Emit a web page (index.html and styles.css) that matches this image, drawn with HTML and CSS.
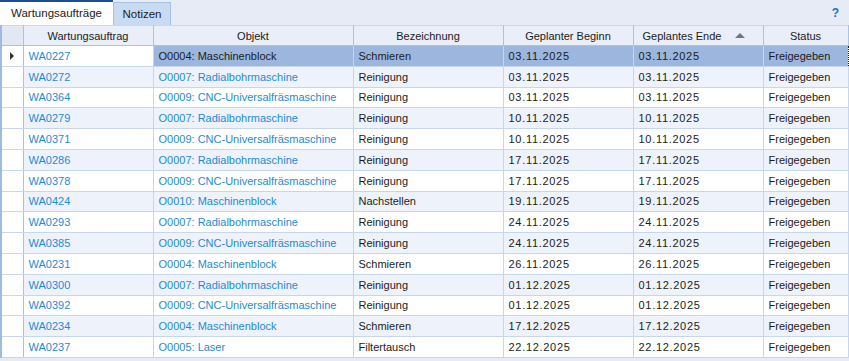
FILE: index.html
```html
<!DOCTYPE html>
<html lang="de">
<head>
    <meta charset="UTF-8">
    <title>Wartungsaufträge</title>
    <link rel="stylesheet" href="styles.css">
</head>
<body>
    <div class="tabstrip">
        <div class="tab active">Wartungsaufträge</div>
        <div class="tab">Notizen</div>
        <div class="help">?</div>
    </div>

    <table class="grid">
        <colgroup>
            <col class="c-ind">
            <col class="c-wa">
            <col class="c-obj">
            <col class="c-bez">
            <col class="c-beg">
            <col class="c-end">
            <col class="c-st">
        </colgroup>
        <thead>
            <tr>
                <th class="ind"></th>
                <th>Wartungsauftrag</th>
                <th>Objekt</th>
                <th>Bezeichnung</th>
                <th>Geplanter Beginn</th>
                <th class="sorted">Geplantes Ende<span class="sort-arrow"></span></th>
                <th>Status</th>
            </tr>
        </thead>
        <tbody>
            <tr class="selected">
                <td class="ind"><span class="row-arrow"></span></td>
                <td class="link focused">WA0227</td>
                <td>O0004: Maschinenblock</td>
                <td>Schmieren</td>
                <td class="date">03.11.2025</td>
                <td class="date">03.11.2025</td>
                <td>Freigegeben</td>
            </tr>
            <tr><td class="ind"></td><td class="link">WA0272</td><td class="link">O0007: Radialbohrmaschine</td><td>Reinigung</td><td class="date">03.11.2025</td><td class="date">03.11.2025</td><td>Freigegeben</td></tr>
            <tr><td class="ind"></td><td class="link">WA0364</td><td class="link">O0009: CNC-Universalfräsmaschine</td><td>Reinigung</td><td class="date">03.11.2025</td><td class="date">03.11.2025</td><td>Freigegeben</td></tr>
            <tr><td class="ind"></td><td class="link">WA0279</td><td class="link">O0007: Radialbohrmaschine</td><td>Reinigung</td><td class="date">10.11.2025</td><td class="date">10.11.2025</td><td>Freigegeben</td></tr>
            <tr><td class="ind"></td><td class="link">WA0371</td><td class="link">O0009: CNC-Universalfräsmaschine</td><td>Reinigung</td><td class="date">10.11.2025</td><td class="date">10.11.2025</td><td>Freigegeben</td></tr>
            <tr><td class="ind"></td><td class="link">WA0286</td><td class="link">O0007: Radialbohrmaschine</td><td>Reinigung</td><td class="date">17.11.2025</td><td class="date">17.11.2025</td><td>Freigegeben</td></tr>
            <tr><td class="ind"></td><td class="link">WA0378</td><td class="link">O0009: CNC-Universalfräsmaschine</td><td>Reinigung</td><td class="date">17.11.2025</td><td class="date">17.11.2025</td><td>Freigegeben</td></tr>
            <tr><td class="ind"></td><td class="link">WA0424</td><td class="link">O0010: Maschinenblock</td><td>Nachstellen</td><td class="date">19.11.2025</td><td class="date">19.11.2025</td><td>Freigegeben</td></tr>
            <tr><td class="ind"></td><td class="link">WA0293</td><td class="link">O0007: Radialbohrmaschine</td><td>Reinigung</td><td class="date">24.11.2025</td><td class="date">24.11.2025</td><td>Freigegeben</td></tr>
            <tr><td class="ind"></td><td class="link">WA0385</td><td class="link">O0009: CNC-Universalfräsmaschine</td><td>Reinigung</td><td class="date">24.11.2025</td><td class="date">24.11.2025</td><td>Freigegeben</td></tr>
            <tr><td class="ind"></td><td class="link">WA0231</td><td class="link">O0004: Maschinenblock</td><td>Schmieren</td><td class="date">26.11.2025</td><td class="date">26.11.2025</td><td>Freigegeben</td></tr>
            <tr><td class="ind"></td><td class="link">WA0300</td><td class="link">O0007: Radialbohrmaschine</td><td>Reinigung</td><td class="date">01.12.2025</td><td class="date">01.12.2025</td><td>Freigegeben</td></tr>
            <tr><td class="ind"></td><td class="link">WA0392</td><td class="link">O0009: CNC-Universalfräsmaschine</td><td>Reinigung</td><td class="date">01.12.2025</td><td class="date">01.12.2025</td><td>Freigegeben</td></tr>
            <tr><td class="ind"></td><td class="link">WA0234</td><td class="link">O0004: Maschinenblock</td><td>Schmieren</td><td class="date">17.12.2025</td><td class="date">17.12.2025</td><td>Freigegeben</td></tr>
            <tr><td class="ind"></td><td class="link">WA0237</td><td class="link">O0005: Laser</td><td>Filtertausch</td><td class="date">22.12.2025</td><td class="date">22.12.2025</td><td>Freigegeben</td></tr>
        </tbody>
    </table>
</body>
</html>
```

FILE: styles.css
```css
body {
    margin: 0;
    background-color: #e6ebf5;
    font-family: "Liberation Sans", Arial, sans-serif;
    font-size: 11px;
    color: #1b1b1b;
    overflow: hidden;
}

.tabstrip {
    display: flex;
    align-items: flex-end;
    height: 25px;
}

.tab {
    height: 23px;
    line-height: 22px;
    font-size: 11.5px;
    background-color: #c9dbf3;
    border: 1px solid #a6c1e6;
    border-bottom: none;
    box-sizing: border-box;
    width: 58px;
    text-align: center;
}

.tab.active {
    width: 113px;
    height: 25px;
    line-height: 23px;
    background-color: #fff;
    border: none;
    border-top: 2px solid #1d4f8e;
}

.help {
    margin-left: auto;
    align-self: center;
    margin-right: 10px;
    color: #1f6fc2;
    font-weight: bold;
    font-size: 12px;
}

.grid {
    table-layout: fixed;
    border-collapse: collapse;
    width: 847px;
    border-left: 2px solid #9fb9df;
    background-color: #fff;
}

.c-ind { width: 22px; }
.c-wa { width: 130px; }
.c-obj { width: 200px; }
.c-bez { width: 150px; }
.c-beg { width: 130px; }
.c-end { width: 130px; }
.c-st { width: 85px; }

.grid th {
    height: 20px;
    padding: 0;
    font-weight: normal;
    font-size: 11px;
    text-align: center;
    background-color: #e9eef8;
    border: 1px solid #a9c3e6;
    border-top: 1px solid #c8d8ee;
    box-sizing: border-box;
    white-space: nowrap;
}

.grid th.ind {
    background-color: #e1e8f4;
}

.grid th.sorted {
    position: relative;
    padding-right: 32px;
}

.sort-arrow {
    position: absolute;
    right: 18px;
    top: 7px;
    width: 0;
    height: 0;
    border-left: 5px solid transparent;
    border-right: 5px solid transparent;
    border-bottom: 5px solid #6f7680;
}

.grid td {
    height: 20.8px;
    padding: 0 4px 0 5px;
    border: 1px solid #c5d6ee;
    box-sizing: border-box;
    white-space: nowrap;
    overflow: hidden;
    font-size: 11px;
}

.grid td.date {
    letter-spacing: 0.7px;
}

.grid tbody tr:nth-child(even) td {
    background-color: #eef2fb;
}

.grid td.ind {
    background-color: #fff;
    border-right: 1px solid #a9c3e6;
    padding: 0;
    position: relative;
}

.grid tbody tr:nth-child(even) td.ind {
    background-color: #fff;
}

.grid td.link {
    color: #1e8ad8;
}

.grid tr.selected td {
    background-color: #9db6de;
    border-top: 1px dotted #222;
    border-bottom: 1px dotted #222;
}

.grid tr.selected td.ind {
    background-color: #fff;
    border-top: 1px solid #c5d6ee;
    border-bottom: 1px solid #c5d6ee;
}

.grid tr.selected td.focused {
    background-color: #fff;
    border-left: 1px dotted #222;
}

.grid tr.selected td:last-child {
    border-right: 1px dotted #222;
}

.row-arrow {
    position: absolute;
    left: 8px;
    top: 6px;
    width: 0;
    height: 0;
    border-top: 4px solid transparent;
    border-bottom: 4px solid transparent;
    border-left: 4px solid #333;
}
```
